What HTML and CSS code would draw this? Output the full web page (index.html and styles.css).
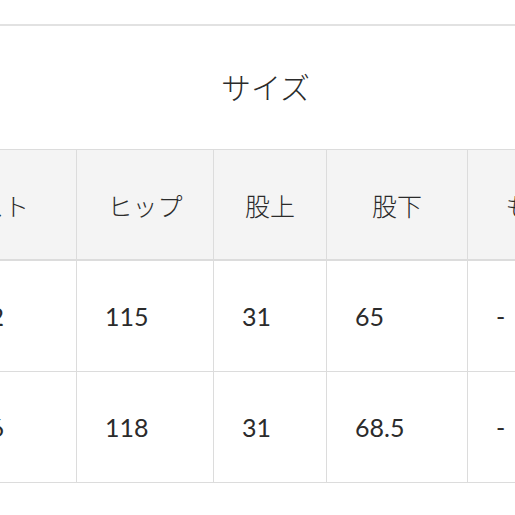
FILE: index.html
```html
<!DOCTYPE html>
<html lang="ja">
<head>
<meta charset="utf-8">
<link rel="stylesheet" href="styles.css">
</head>
<body>
<section class="size-section">
  <h2 class="size-title">サイズ</h2>
  <table class="size-table">
    <colgroup>
      <col class="c1"><col class="c2"><col class="c3"><col class="c4"><col class="c5">
    </colgroup>
    <thead>
      <tr>
        <th class="first-col">ウエスト</th>
        <th>ヒップ</th>
        <th>股上</th>
        <th>股下</th>
        <th>もも周り</th>
      </tr>
    </thead>
    <tbody>
      <tr><td class="first-col">72</td><td>115</td><td>31</td><td>65</td><td>-</td></tr>
      <tr><td class="first-col">76</td><td>118</td><td>31</td><td>68.5</td><td>-</td></tr>
    </tbody>
  </table>
</section>
</body>
</html>
```

FILE: styles.css
```css
html, body {
  margin: 0;
  padding: 0;
  background: #ffffff;
  overflow: hidden;
}

body {
  font-family: Lato, "Noto Sans CJK JP", sans-serif;
  color: #2b2b2b;
}

.size-section {
  margin-top: 24px;
  border-top: 2px solid #e2e2e2;
}

.size-title {
  margin: 0;
  height: 123px;
  line-height: 123px;
  padding-left: 16px;
  text-align: center;
  font-size: 30px;
  font-weight: 300;
  letter-spacing: 0;
}

.size-table {
  margin-left: -94px;
  border-collapse: collapse;
  table-layout: fixed;
  width: 737px;
}

.c1 { width: 170px; }
.c2 { width: 137px; }
.c3 { width: 113px; }
.c4 { width: 141px; }
.c5 { width: 176px; }

.size-table th,
.size-table td {
  border: 1px solid #dcdcdc;
  height: 110px;
  padding: 0;
  font-size: 25px;
  font-weight: 400;
  white-space: nowrap;
  overflow: hidden;
}

.size-table th {
  background: #f4f4f4;
  text-align: center;
  font-weight: 300;
  height: 109px;
  border-bottom: 2px solid #dcdcdc;
}

.size-table td {
  text-align: left;
  padding-left: 28px;
  background: #ffffff;
}

.size-table th.first-col {
  text-align: right;
  padding-right: 47px;
}

.size-table td.first-col {
  text-align: right;
  padding-left: 0;
  padding-right: 72px;
}
```
